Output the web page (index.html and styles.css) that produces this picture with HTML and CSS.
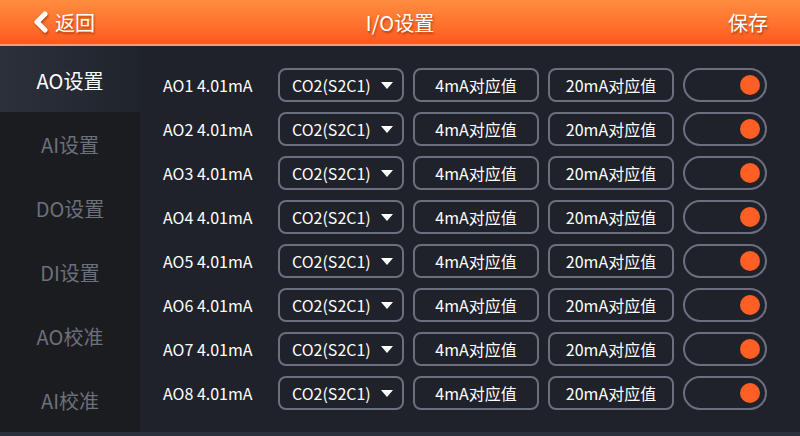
FILE: index.html
```html
<!DOCTYPE html>
<html lang="zh-CN">
<head>
<meta charset="utf-8">
<title>I/O设置</title>
<link rel="stylesheet" href="styles.css">
</head>
<body>
<div class="app">
  <header class="topbar">
    <div class="back">
      <svg class="chev" width="18" height="22" viewBox="0 0 18 22"><polyline points="13,3 5,11 13,19" fill="none" stroke="#fff" stroke-width="5" stroke-linecap="round" stroke-linejoin="round"/></svg>
      <span>返回</span>
    </div>
    <div class="title">I/O设置</div>
    <div class="save">保存</div>
  </header>
  <div class="content">
    <nav class="sidebar">
      <div class="nav-item active">AO设置</div>
      <div class="nav-item">AI设置</div>
      <div class="nav-item">DO设置</div>
      <div class="nav-item">DI设置</div>
      <div class="nav-item">AO校准</div>
      <div class="nav-item">AI校准</div>
    </nav>
    <main class="rows">
      <div class="row"><div class="label">AO1 4.01mA</div><div class="box select">CO2(S2C1)<span class="tri"></span></div><div class="box">4mA对应值</div><div class="box">20mA对应值</div><div class="toggle"><span class="knob"></span></div></div>
      <div class="row"><div class="label">AO2 4.01mA</div><div class="box select">CO2(S2C1)<span class="tri"></span></div><div class="box">4mA对应值</div><div class="box">20mA对应值</div><div class="toggle"><span class="knob"></span></div></div>
      <div class="row"><div class="label">AO3 4.01mA</div><div class="box select">CO2(S2C1)<span class="tri"></span></div><div class="box">4mA对应值</div><div class="box">20mA对应值</div><div class="toggle"><span class="knob"></span></div></div>
      <div class="row"><div class="label">AO4 4.01mA</div><div class="box select">CO2(S2C1)<span class="tri"></span></div><div class="box">4mA对应值</div><div class="box">20mA对应值</div><div class="toggle"><span class="knob"></span></div></div>
      <div class="row"><div class="label">AO5 4.01mA</div><div class="box select">CO2(S2C1)<span class="tri"></span></div><div class="box">4mA对应值</div><div class="box">20mA对应值</div><div class="toggle"><span class="knob"></span></div></div>
      <div class="row"><div class="label">AO6 4.01mA</div><div class="box select">CO2(S2C1)<span class="tri"></span></div><div class="box">4mA对应值</div><div class="box">20mA对应值</div><div class="toggle"><span class="knob"></span></div></div>
      <div class="row"><div class="label">AO7 4.01mA</div><div class="box select">CO2(S2C1)<span class="tri"></span></div><div class="box">4mA对应值</div><div class="box">20mA对应值</div><div class="toggle"><span class="knob"></span></div></div>
      <div class="row"><div class="label">AO8 4.01mA</div><div class="box select">CO2(S2C1)<span class="tri"></span></div><div class="box">4mA对应值</div><div class="box">20mA对应值</div><div class="toggle"><span class="knob"></span></div></div>
    </main>
  </div>
  <div class="footbar"></div>
</div>
</body>
</html>
```
FILE: styles.css
```css
* { box-sizing: border-box; }
html, body { margin: 0; padding: 0; }
body {
  width: 800px;
  height: 436px;
  overflow: hidden;
  background: #1f222a;
  font-family: "Noto Sans CJK SC", "Noto Sans", sans-serif;
  color: #fff;
}
.app {
  display: flex;
  flex-direction: column;
  height: 436px;
}
.topbar {
  height: 46px;
  flex: none;
  display: grid;
  grid-template-columns: 1fr auto 1fr;
  align-items: center;
  padding: 0 32px 0 32px;
  background: linear-gradient(to bottom, #ff8d40 0%, #ff6f2c 60%, #ff5a20 95%);
  border-bottom: 2px solid #ff9a66;
  font-size: 20px;
  text-shadow: 1px 2px 2px rgba(120, 35, 0, 0.55);
}
.back {
  display: flex;
  align-items: center;
  gap: 5px;
}
.chev { filter: drop-shadow(1px 2px 1px rgba(120, 35, 0, 0.5)); }
.title { text-align: center; }
.save { text-align: right; }
.content {
  flex: 1;
  display: flex;
  min-height: 0;
}
.sidebar {
  width: 140px;
  flex: none;
  background: #1b1c20;
  display: flex;
  flex-direction: column;
}
.nav-item {
  height: 64px;
  display: flex;
  align-items: center;
  justify-content: center;
  font-size: 20px;
  color: #6b707c;
}
.nav-item.active {
  height: 66px;
  padding-top: 2px;
  color: #fff;
  background: linear-gradient(to right, #2b303b, #20242c);
}
.rows {
  flex: 1;
  padding: 22px 0 0 23px;
  display: flex;
  flex-direction: column;
  gap: 10px;
  background: #1f222a;
}
.row {
  display: grid;
  grid-template-columns: 106px 126px 126px 126px 84px;
  column-gap: 9px;
  height: 34px;
  align-items: center;
}
.label {
  font-size: 16px;
  color: #fff;
  white-space: nowrap;
}
.box {
  height: 34px;
  border: 2px solid #6a7080;
  border-radius: 8px;
  display: flex;
  align-items: center;
  justify-content: center;
  font-size: 16px;
  color: #fff;
  white-space: nowrap;
}
.select {
  justify-content: flex-start;
  padding-left: 12px;
}
.tri {
  margin-left: 10px;
  width: 0;
  height: 0;
  border-left: 6px solid transparent;
  border-right: 6px solid transparent;
  border-top: 7px solid #fff;
}
.toggle {
  height: 34px;
  border: 2px solid #6a7080;
  border-radius: 17px;
  display: flex;
  align-items: center;
  justify-content: flex-end;
  padding-right: 5px;
}
.knob {
  width: 20px;
  height: 20px;
  border-radius: 50%;
  background: #ff5f24;
}
.footbar {
  height: 4px;
  flex: none;
  background: #2b313c;
}
```
